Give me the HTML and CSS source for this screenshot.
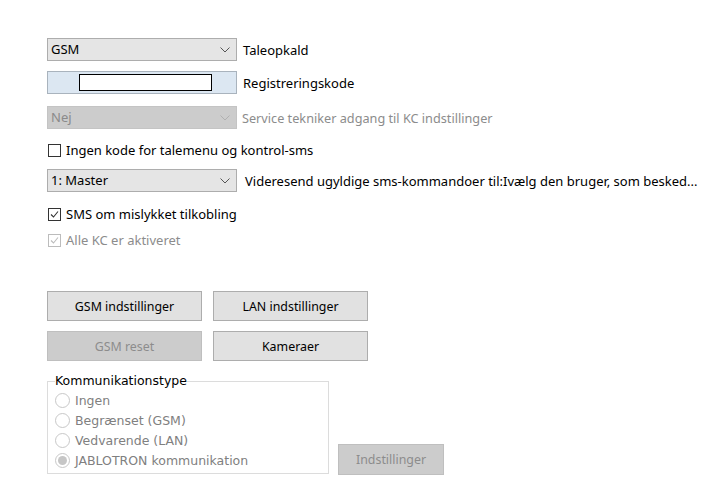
FILE: index.html
```html
<!DOCTYPE html>
<html>
<head>
<meta charset="utf-8">
<link rel="stylesheet" href="styles.css">
</head>
<body>
<div class="form">
  <div class="row r1">
    <div class="combo"><span>GSM</span><svg class="chev" width="10" height="6" viewBox="0 0 10 6"><path d="M0.5 0.5 L5 5 L9.5 0.5" fill="none" stroke="#555" stroke-width="1"/></svg></div>
    <span class="lbl">Taleopkald</span>
  </div>
  <div class="row r2">
    <div class="code"><div class="code-inner"></div></div>
    <span class="lbl">Registreringskode</span>
  </div>
  <div class="row r3">
    <div class="combo disabled"><span>Nej</span><svg class="chev" width="10" height="6" viewBox="0 0 10 6"><path d="M0.5 0.5 L5 5 L9.5 0.5" fill="none" stroke="#b0b0b0" stroke-width="1"/></svg></div>
    <span class="lbl dis">Service tekniker adgang til KC indstillinger</span>
  </div>
  <label class="check r4"><span class="box"></span><span>Ingen kode for talemenu og kontrol-sms</span></label>
  <div class="row r5">
    <div class="combo"><span>1: Master</span><svg class="chev" width="10" height="6" viewBox="0 0 10 6"><path d="M0.5 0.5 L5 5 L9.5 0.5" fill="none" stroke="#555" stroke-width="1"/></svg></div>
    <span class="lbl wide">Videresend ugyldige sms-kommandoer til:Ivælg den bruger, som besked...</span>
  </div>
  <label class="check r6"><span class="box"><svg width="11" height="11" viewBox="0 0 11 11"><path d="M2 5.5 L4.5 8 L9 2.5" fill="none" stroke="#333" stroke-width="1.1"/></svg></span><span>SMS om mislykket tilkobling</span></label>
  <label class="check r7 dis"><span class="box"><svg width="11" height="11" viewBox="0 0 11 11"><path d="M2 5.5 L4.5 8 L9 2.5" fill="none" stroke="#bcbcbc" stroke-width="1.1"/></svg></span><span>Alle KC er aktiveret</span></label>

  <div class="buttons">
    <button class="btn">GSM indstillinger</button>
    <button class="btn">LAN indstillinger</button>
    <button class="btn disabled">GSM reset</button>
    <button class="btn">Kameraer</button>
  </div>

  <div class="bottom">
    <fieldset class="group">
      <legend>Kommunikationstype</legend>
      <div class="radio"><span class="circle"></span>Ingen</div>
      <div class="radio"><span class="circle"></span>Begrænset (GSM)</div>
      <div class="radio"><span class="circle"></span>Vedvarende (LAN)</div>
      <div class="radio"><span class="circle on"></span>JABLOTRON kommunikation</div>
    </fieldset>
    <button class="btn disabled small">Indstillinger</button>
  </div>
</div>
</body>
</html>
```

FILE: styles.css
```css
* { box-sizing: border-box; }
html, body { margin: 0; padding: 0; background: #fff; }
body {
  font-family: "Noto Sans", "Open Sans", sans-serif;
  font-size: 13px;
  color: #000;
  width: 709px;
  height: 498px;
  overflow: hidden;
}
.form {
  padding: 38px 0 0 47px;
  display: flex;
  flex-direction: column;
  align-items: flex-start;
}
.row {
  display: flex;
  align-items: center;
  height: 23px;
}
.combo {
  width: 190px;
  height: 23px;
  background: #e5e5e5;
  border: 1px solid #adadad;
  display: flex;
  align-items: center;
  justify-content: space-between;
  padding: 0 5px 0 3px;
  line-height: 1;
}
.combo.disabled {
  background: #cccccc;
  border-color: #c4c4c4;
  color: #8a8a8a;
}
.chev { margin-right: 1px; }
.lbl { margin-left: 6px; white-space: nowrap; }
.lbl.wide { margin-left: 8px; }
.lbl.dis { color: #8c8c8c; margin-left: 5px; font-size: 12.7px; }
.r2 { margin-top: 10px; }
.code {
  width: 190px;
  height: 23px;
  background: #dce7f2;
  border: 1px solid #a9b3bd;
  display: flex;
  align-items: center;
  padding-left: 31px;
}
.code-inner {
  width: 133px;
  height: 17px;
  background: #fff;
  border: 1px solid #000;
}
.r3 { margin-top: 12px; }
.check {
  display: flex;
  align-items: center;
  height: 16px;
  white-space: nowrap;
}
.check .box {
  width: 13px;
  height: 13px;
  border: 1px solid #333;
  background: #fff;
  margin: 0 5px 0 1px;
  display: flex;
  align-items: center;
  justify-content: center;
}
.check.dis { color: #8c8c8c; }
.check.dis .box { border-color: #bcbcbc; }
.r4 { margin-top: 13px; }
.r5 { margin-top: 11px; }
.r6 { margin-top: 14px; }
.r7 { margin-top: 10px; }
.buttons {
  margin-top: 43px;
  display: grid;
  grid-template-columns: 155px 155px;
  column-gap: 11px;
  row-gap: 10px;
}
.btn {
  font-family: "Noto Sans", "Open Sans", sans-serif;
  font-size: 12.4px;
  color: #000;
  height: 30px;
  background: #e1e1e1;
  border: 1px solid #adadad;
  padding: 0;
  margin: 0;
}
.btn.disabled {
  background: #cccccc;
  border-color: #bfbfbf;
  color: #8c8c8c;
}
.bottom {
  margin-top: 13px;
  display: flex;
  align-items: flex-end;
}
.group {
  margin: 0;
  width: 282px;
  height: 100px;
  border: 1px solid #dcdcdc;
  padding: 2px 0 0 7px;
  font-family: "DejaVu Sans", sans-serif;
  font-size: 12.5px;
}
.group legend {
  padding: 0;
  margin-left: 0;
  color: #000;
  line-height: 14px;
}
.radio {
  display: flex;
  align-items: center;
  height: 20px;
  color: #808080;
  white-space: nowrap;
}
.circle {
  width: 15px;
  height: 15px;
  border: 1px solid #c8c8c8;
  border-radius: 50%;
  background: #fff;
  margin-right: 5px;
  display: flex;
  align-items: center;
  justify-content: center;
}
.circle.on::after {
  content: "";
  width: 9px;
  height: 9px;
  border-radius: 50%;
  background: #c6c6c6;
}
.btn.small {
  width: 106px;
  height: 31px;
  margin-left: 9px;
  margin-bottom: -1px;
}
```
